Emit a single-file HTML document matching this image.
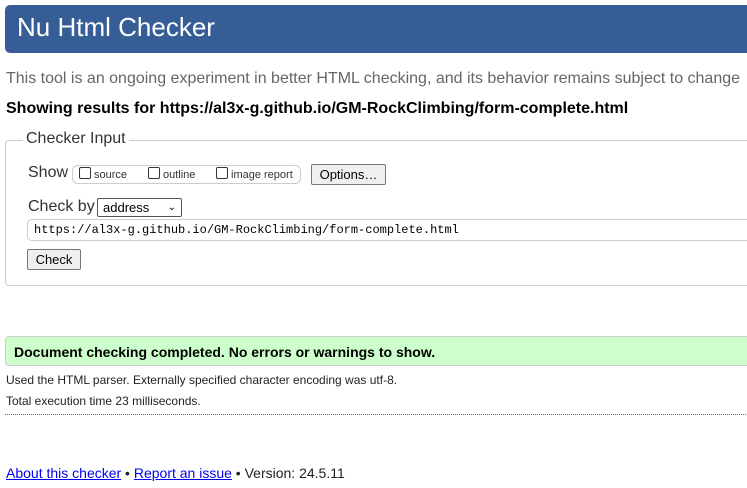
<!DOCTYPE html><html><head><style>
*{margin:0;padding:0;box-sizing:border-box}
body{width:747px;height:488px;overflow:hidden;background:#fff;font-family:"Liberation Sans",Arial,sans-serif;position:relative;color:#000}
.a{position:absolute;white-space:nowrap}
.cb{display:inline-block;width:12px;height:12px;border:1px solid #333;border-radius:2px;vertical-align:-1px;margin-right:3px;background:#fff}
</style></head><body>
<div class="a" style="left:5px;top:5px;width:750px;height:48px;background:#365d95;border-radius:5px"></div>
<div class="a" style="left:17px;top:12px;font-size:26px;color:#fff">Nu Html Checker</div>
<div class="a" style="left:6px;top:70px;font-size:16px;color:#666">This tool is an ongoing experiment in better HTML checking, and its behavior remains subject to change</div>
<div class="a" style="left:6px;top:100px;font-size:16px;font-weight:bold">Showing results for https://al3x-g.github.io/GM-RockClimbing/form-complete.html</div>
<div class="a" style="left:5px;top:140px;width:760px;height:146px;border:1px solid #ccc;border-radius:4px"></div>
<div class="a" style="left:23px;top:130px;font-size:16px;background:#fff;padding:0 3px;color:#333">Checker Input</div>
<div class="a" style="left:28px;top:164px;font-size:16px;color:#333">Show</div>
<div class="a" style="left:72px;top:165px;width:229px;height:19px;border:1px solid #ccc;border-radius:6px"></div>
<div class="a" style="left:79px;top:167px;font-size:11px;color:#333"><span class="cb"></span>source</div>
<div class="a" style="left:148px;top:167px;font-size:11px;color:#333"><span class="cb"></span>outline</div>
<div class="a" style="left:216px;top:167px;font-size:11px;color:#333"><span class="cb"></span>image report</div>
<div class="a" style="left:311px;top:164px;width:75px;height:21px;border:1px solid #777;background:#efefef;border-radius:2px;font-size:13px;text-align:center;line-height:19px">Options…</div>
<div class="a" style="left:28px;top:198px;font-size:16px;color:#333">Check by</div>
<div class="a" style="left:97px;top:198px;width:85px;height:19px;border:1px solid #555;border-radius:2px;font-size:13px;padding-left:5px;line-height:17px">address<span style="position:absolute;right:5px;font-size:10px">⌄</span></div>
<div class="a" style="left:27px;top:219px;width:730px;height:22px;border:1px solid #ccc;border-radius:5px;font-family:'Liberation Mono',monospace;font-size:12px;padding-left:6px;line-height:20px">https://al3x-g.github.io/GM-RockClimbing/form-complete.html</div>
<div class="a" style="left:27px;top:249px;width:54px;height:21px;border:1px solid #777;background:#efefef;border-radius:2px;font-size:13px;text-align:center;line-height:19px">Check</div>
<div class="a" style="left:5px;top:336px;width:760px;height:30px;background:#ccffcc;border:1px solid #ccc;border-radius:4px"></div>
<div class="a" style="left:14px;top:344px;font-size:14px;font-weight:bold">Document checking completed. No errors or warnings to show.</div>
<div class="a" style="left:6px;top:373px;font-size:12px;color:#222">Used the HTML parser. Externally specified character encoding was utf-8.</div>
<div class="a" style="left:6px;top:394px;font-size:12px;color:#222">Total execution time 23 milliseconds.</div>
<div class="a" style="left:5px;top:414px;width:745px;border-top:1px dotted #666"></div>
<div class="a" style="left:6px;top:465px;font-size:14px;color:#222"><span style="color:#00e;text-decoration:underline">About this checker</span> • <span style="color:#00e;text-decoration:underline">Report an issue</span> • Version: 24.5.11</div>
</body></html>
